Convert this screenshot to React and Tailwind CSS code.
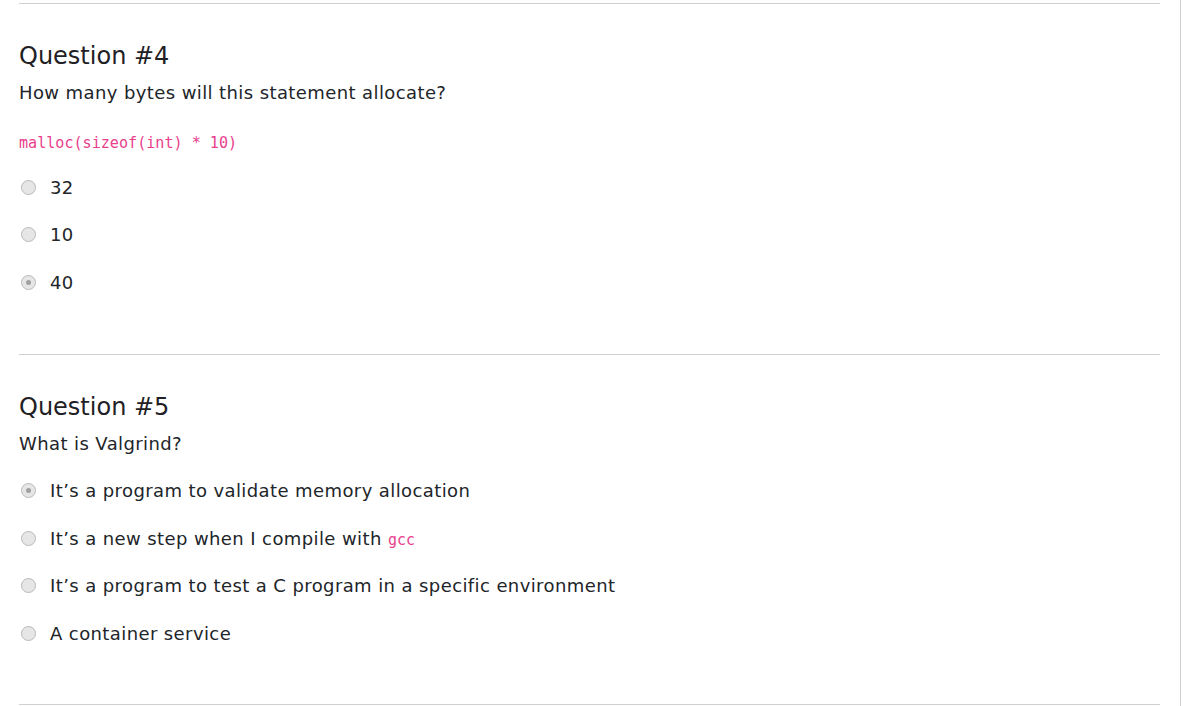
import React from 'react';

const sans = { fontFamily: '"DejaVu Sans", "Open Sans", sans-serif' };

function Radio({ checked }) {
  return (
    <span className="flex h-[15px] w-[15px] shrink-0 items-center justify-center rounded-full border border-[#b8b8b8] bg-[#e6e6e6]">
      {checked && <span className="h-[5px] w-[5px] rounded-full bg-[#a0a0a0]" />}
    </span>
  );
}

function Code({ children }) {
  return (
    <code className="font-['DejaVu_Sans_Mono','Liberation_Mono',monospace] tracking-normal text-[#e83e8c]">
      {children}
    </code>
  );
}

function Question({ number, prompt, snippet, options }) {
  return (
    <div className="pt-[37px] pb-[46.5px] border-b border-[#d0d0d0]">
      <h3 className="text-[24px] leading-[30px] text-[#1f2125]">Question #{number}</h3>
      <p className="mt-[8px] text-[18px] leading-[27px] tracking-[0.4px] text-[#212529]">{prompt}</p>
      {snippet && (
        <div className="mt-[26px] text-[15.1px] leading-[22px]">
          <Code>{snippet}</Code>
        </div>
      )}
      <ul className={snippet ? 'mt-[9.5px] mb-[1px]' : 'mt-[10.5px]'}>
        {options.map((opt, i) => (
          <li key={i} className="flex h-[47.5px] items-center pl-[2px]">
            <Radio checked={opt.checked} />
            <span className="ml-[14px] text-[18px] tracking-[0.4px] text-[#212529]">{opt.label}</span>
          </li>
        ))}
      </ul>
    </div>
  );
}

export default function App() {
  return (
    <div className="h-[706px] w-[1181px] overflow-hidden border-r border-[#cfcfcf] bg-white" style={sans}>
      <div className="pl-[19px] pr-[20px] pt-[3px]">
        <div className="border-t border-[#d0d0d0]" />
        <Question
          number={4}
          prompt="How many bytes will this statement allocate?"
          snippet="malloc(sizeof(int) * 10)"
          options={[{ label: '32' }, { label: '10' }, { label: '40', checked: true }]}
        />
        <Question
          number={5}
          prompt="What is Valgrind?"
          options={[
            { label: 'It’s a program to validate memory allocation', checked: true },
            { label: <>It’s a new step when I compile with <span className="text-[15px]"><Code>gcc</Code></span></> },
            { label: 'It’s a program to test a C program in a specific environment' },
            { label: 'A container service' },
          ]}
        />
      </div>
    </div>
  );
}
